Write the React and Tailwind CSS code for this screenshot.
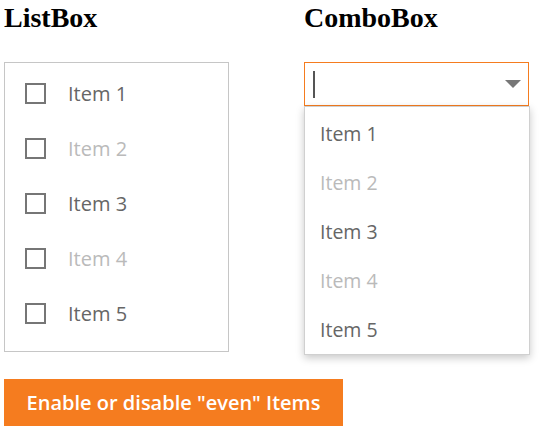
import React from 'react';

const items = ['Item 1', 'Item 2', 'Item 3', 'Item 4', 'Item 5'];

const App = () => {
    return (
        <div className="w-[539px] h-[430px] bg-white font-['Open_Sans',sans-serif]">
            <div className="flex pl-[4px]">
                {/* ListBox column */}
                <div className="w-[225px]">
                    <h2 className="pt-[2px] h-[62px] font-['Liberation_Serif',serif] font-bold text-[28px] leading-[32px] text-black">
                        ListBox
                    </h2>
                    <div className="border border-[#c6c6c6] pt-[3px] pb-[10px]">
                        {items.map((item, i) => (
                            <div key={item} className="h-[55px] flex items-center pl-[20px]">
                                <span className="w-[21px] h-[21px] border-2 border-[#767676] bg-white" />
                                <span className={`ml-[22px] text-[20px] ${i % 2 === 1 ? 'text-[#bababa]' : 'text-[#666666]'}`}>
                                    {item}
                                </span>
                            </div>
                        ))}
                    </div>
                </div>

                {/* ComboBox column */}
                <div className="ml-[75px] w-[225px] relative">
                    <h2 className="pt-[2px] h-[62px] font-['Liberation_Serif',serif] font-bold text-[28px] leading-[32px] text-black">
                        ComboBox
                    </h2>
                    <div className="h-[44px] border border-[#f57c1f] flex items-center pl-[8px] pr-[7px]">
                        <span className="w-[2px] h-[27px] bg-[#555555]" />
                        <svg className="ml-auto" width="16" height="9" viewBox="0 0 16 9">
                            <path d="M0 0 L16 0 L8 8 Z" fill="#777777" />
                        </svg>
                    </div>
                    <div className="absolute left-0 top-[106px] w-[226px] bg-white border border-[#d0d0d0] shadow-[0_3px_8px_rgba(0,0,0,0.22)] pt-[2px] z-10">
                        {items.map((item, i) => (
                            <div key={item} className={`h-[49px] flex items-center pl-[15px] text-[19.5px] ${i % 2 === 1 ? 'text-[#bababa]' : 'text-[#666666]'}`}>
                                {item}
                            </div>
                        ))}
                    </div>
                </div>
            </div>

            <div className="pl-[4px] mt-[27px]">
                <button className="w-[339px] h-[47px] bg-[#f57c1f] text-white text-[20px] font-semibold">
                    Enable or disable "even" Items
                </button>
            </div>
        </div>
    );
};

export default App;
